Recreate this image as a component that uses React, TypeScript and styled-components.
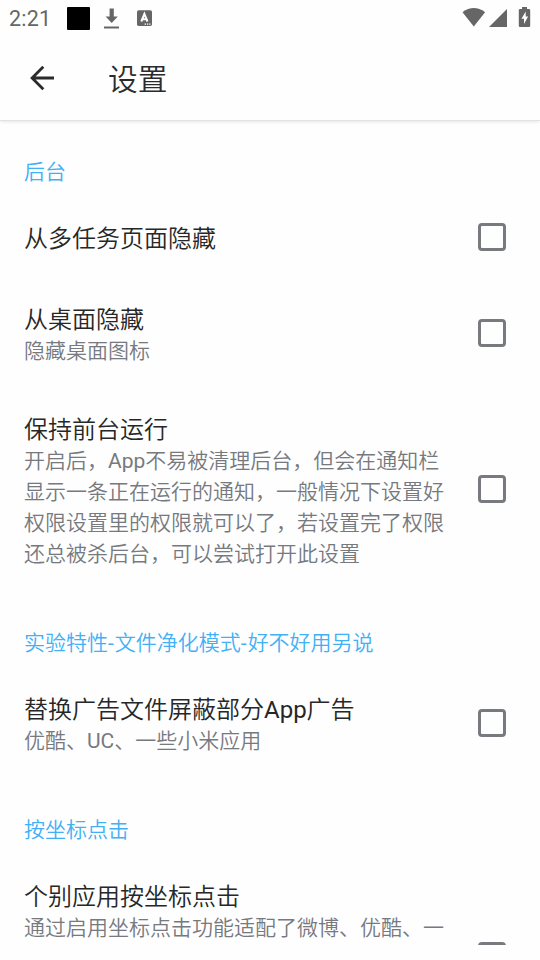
import React from 'react';
import styled, { createGlobalStyle } from 'styled-components';

const GlobalStyle = createGlobalStyle`
  * { box-sizing: border-box; }
  html, body { margin: 0; padding: 0; background: #fefefe; overflow: hidden; }
`;

const Screen = styled.div`
  width: 540px;
  height: 960px;
  display: flex;
  flex-direction: column;
  background: #fefefe;
  font-family: Roboto, 'Noto Sans CJK SC', sans-serif;
  font-weight: 350;
  padding-bottom: 15px;
  overflow: hidden;
`;

const StatusBar = styled.div`
  height: 36px;
  flex: none;
  display: flex;
  align-items: center;
  justify-content: space-between;
  color: #666;
  padding: 0 8px 0 9px;
`;

const StatusGroup = styled.div`
  display: flex;
  align-items: center;
  height: 36px;
`;

const Clock = styled.span`
  width: 58px;
  font-size: 21.5px;
  font-weight: 400;
  line-height: 36px;
  letter-spacing: 0.2px;
  padding-top: 2px;
`;

const AppSquare = styled.span`
  width: 23px;
  height: 23px;
  border-radius: 1px;
  background: #000;
`;

const Toolbar = styled.header`
  height: 85px;
  flex: none;
  display: flex;
  align-items: center;
  padding-left: 24px;
  border-bottom: 1px solid #e2e2e2;
  box-shadow: 0 2px 3px -1px rgba(0, 0, 0, 0.1);
`;

const BackButton = styled.button`
  width: 84px;
  height: 36px;
  padding: 0;
  border: 0;
  background: none;
  display: flex;
  align-items: center;
`;

const PageTitle = styled.h1`
  margin: 0;
  padding-top: 3px;
  font-size: 29.7px;
  font-weight: 350;
  line-height: 40px;
  color: #2a2b2d;
`;

const List = styled.main`
  flex: 1;
  min-height: 0;
  overflow: hidden;
  padding-top: 2px;
`;

const Category = styled.h2`
  margin: 0;
  height: 76px;
  padding: 34px 24px 0;
  font-size: 21px;
  font-weight: 350;
  line-height: 31px;
  color: #41b0f5;
`;

const Row = styled.label<{ $tight?: boolean }>`
  display: flex;
  align-items: center;
  justify-content: space-between;
  padding: 24px 34px ${({ $tight }) => ($tight ? 23 : 24)}px 24px;
`;

const Copy = styled.div<{ $lines?: number }>`
  width: 424px;
  min-height: ${({ $lines = 0 }) => ($lines ? 32 + $lines * 31 : 33)}px;
`;

const Title = styled.div`
  font-size: 24px;
  line-height: 32px;
  color: #262728;
`;

const SummaryLine = styled.div`
  height: 31px;
  font-size: 21px;
  line-height: 31px;
  color: #76797e;
  white-space: pre;
`;

const Latin = styled.span`
  font-weight: 400;
`;

const Dash = styled.span`
  font-weight: 400;
  letter-spacing: 1px;
`;

const Box = styled.span`
  width: 28px;
  height: 28px;
  flex: none;
  margin: -1px 0 5px;
  border: 3px solid #777a7f;
  border-radius: 4px;
`;

type Setting = { title: string; summary?: string[]; lines?: number; tight?: boolean };

const sections: { name: string; items: Setting[] }[] = [
  {
    name: '后台',
    items: [
      { title: '从多任务页面隐藏' },
      { title: '从桌面隐藏', summary: ['隐藏桌面图标'], tight: true },
      {
        title: '保持前台运行',
        summary: [
          '开启后，App不易被清理后台，但会在通知栏',
          '显示一条正在运行的通知，一般情况下设置好',
          '权限设置里的权限就可以了，若设置完了权限',
          '还总被杀后台，可以尝试打开此设置',
        ],
      },
    ],
  },
  {
    name: '实验特性-文件净化模式-好不好用另说',
    items: [{ title: '替换广告文件屏蔽部分App广告', summary: ['优酷、UC、一些小米应用'] }],
  },
  {
    name: '按坐标点击',
    items: [{ title: '个别应用按坐标点击', summary: ['通过启用坐标点击功能适配了微博、优酷、一'], lines: 4 }],
  },
];

// Latin runs carry a regular weight beside the lighter Chinese glyphs.
const mixed = (text: string) =>
  text.split(/([A-Za-z]+|-)/).map((part, i) => {
    if (part === '-') return <Dash key={i}>{part}</Dash>;
    return i % 2 ? <Latin key={i}>{part}</Latin> : part;
  });

const NotificationIcons = () => (
  <svg width="64" height="36" viewBox="90 0 64 36" fill="#666">
    <path d="M109.6 8.5h4.2v8h4L111.7 23l-6.1-6.5h4zM104 26.4h15v2.1h-15z" />
    <rect x="137" y="10.3" width="15" height="15.6" rx="1.6" />
    <path d="M141.3 21.5l3.1-7.6 3.1 7.6M142.4 19.2h4" fill="none" stroke="#fff" strokeWidth="2" />
    <path d="M144.6 23.6h1.3v1.2h-1.3zM146.9 23.6h1.3v1.2h-1.3zM149.2 23.6h1.3v1.2h-1.3z" fill="#fff" />
  </svg>
);

const SystemIcons = () => (
  <svg width="70" height="36" viewBox="462 0 70 36" fill="#666">
    <path d="M462.5 12.2Q473.8 4 485.1 12.2L473.8 26.5z" />
    <path d="M507 9v18h-18z" />
    <path d="M522 7h5v2h2q1.2 0 1.2 1.2v15.6q0 1.2-1.2 1.2h-9q-1.2 0-1.2-1.2V10.2q0-1.2 1.2-1.2h2z" />
    <path d="M525.7 11.5l-4.2 7.3h2.5v5.2l4.1-7.5h-2.4z" fill="#fff" />
  </svg>
);

const BackArrow = () => (
  <svg width="36" height="36" viewBox="0 0 36 36" fill="none" stroke="#2a2b2d" strokeWidth="2.8">
    <path d="M30 18H8.5M19.3 6.8L8.1 18l11.2 11.2" />
  </svg>
);

export default function App() {
  return (
    <Screen>
      <GlobalStyle />
      <StatusBar>
        <StatusGroup>
          <Clock>2:21</Clock>
          <AppSquare />
          <NotificationIcons />
        </StatusGroup>
        <SystemIcons />
      </StatusBar>
      <Toolbar>
        <BackButton aria-label="返回">
          <BackArrow />
        </BackButton>
        <PageTitle>设置</PageTitle>
      </Toolbar>
      <List>
        {sections.map((section) => (
          <section key={section.name}>
            <Category>{mixed(section.name)}</Category>
            {section.items.map((item) => (
              <Row key={item.title} $tight={item.tight}>
                <Copy $lines={item.lines}>
                  <Title>{mixed(item.title)}</Title>
                  {item.summary?.map((line) => (
                    <SummaryLine key={line}>{mixed(line)}</SummaryLine>
                  ))}
                </Copy>
                <Box />
              </Row>
            ))}
          </section>
        ))}
      </List>
    </Screen>
  );
}
